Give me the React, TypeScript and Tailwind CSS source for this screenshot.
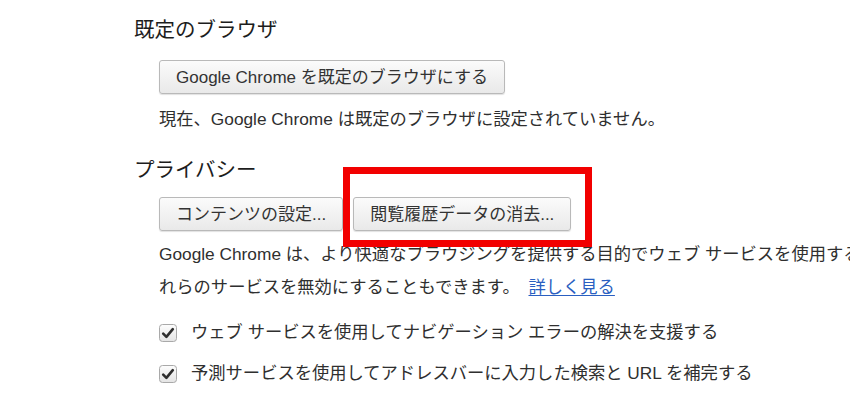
import React from "react";

const font = "font-['Liberation_Sans','Noto_Sans_CJK_JP',sans-serif]";

function Button({ children }: { children: React.ReactNode }) {
  return (
    <button className="h-[34px] rounded-[3px] border border-[#b9b9b9] bg-gradient-to-b from-[#fbfbfb] to-[#e9e9e9] px-4 text-[17px] leading-none text-[#333] shadow-[0_1px_1px_rgba(0,0,0,0.12)]">
      {children}
    </button>
  );
}

function CheckRow({ label }: { label: string }) {
  return (
    <div className="flex h-6 items-center gap-[14px]">
      <svg width="18" height="18" viewBox="0 0 18 18" className="shrink-0">
        <defs>
          <linearGradient id="cb" x1="0" y1="0" x2="0" y2="1">
            <stop offset="0" stopColor="#fdfdfd" />
            <stop offset="1" stopColor="#e4e4e4" />
          </linearGradient>
        </defs>
        <rect x="0.5" y="0.5" width="17" height="17" rx="3" fill="url(#cb)" stroke="#a9a9a9" />
        <path d="M4.2 9.6 L7.4 12.8 L13.8 5.2" fill="none" stroke="#2e2e2e" strokeWidth="2.6" strokeLinecap="round" strokeLinejoin="round" />
      </svg>
      <span className="whitespace-nowrap text-[17.3px] text-[#2f2f2f]">{label}</span>
    </div>
  );
}

export default function App() {
  return (
    <div className={`relative h-[408px] w-[850px] overflow-hidden bg-white pl-[134px] pt-[18px] ${font}`}>
      {/* 既定のブラウザ */}
      <h2 className="text-[20.5px] leading-[24px] text-[#1d1d1d]">既定のブラウザ</h2>
      <div className="pl-[25px]">
        <div className="mt-[18px]">
          <Button>Google Chrome を既定のブラウザにする</Button>
        </div>
        <p className="mt-[13px] whitespace-nowrap text-[17.3px] leading-[24px] text-[#2f2f2f]">
          現在、Google Chrome は既定のブラウザに設定されていません。
        </p>
      </div>

      {/* プライバシー */}
      <h2 className="mt-[27px] text-[20.5px] leading-[24px] text-[#1d1d1d]">プライバシー</h2>
      <div className="pl-[25px]">
        <div className="mt-[15px] flex gap-[10px]">
          <Button>コンテンツの設定...</Button>
          <Button>閲覧履歴データの消去...</Button>
        </div>
        <div className="mt-[7px] whitespace-nowrap text-[17.3px] leading-[33px] text-[#2f2f2f]">
          <div>Google Chrome は、より快適なブラウジングを提供する目的でウェブ サービスを使用することがあります。必要に応じて、こ</div>
          <div>
            れらのサービスを無効にすることもできます。{" "}
            <a href="#" className="ml-1 text-[#2a5fc1] underline underline-offset-2">詳しく見る</a>
          </div>
        </div>
        <div className="mt-[17px] flex flex-col gap-[17px]">
          <CheckRow label="ウェブ サービスを使用してナビゲーション エラーの解決を支援する" />
          <CheckRow label="予測サービスを使用してアドレスバーに入力した検索と URL を補完する" />
        </div>
      </div>

      {/* annotation frame */}
      <div className="pointer-events-none absolute left-[343px] top-[167px] h-[80px] w-[249px] border-[7px] border-[#f20000]" />
    </div>
  );
}
